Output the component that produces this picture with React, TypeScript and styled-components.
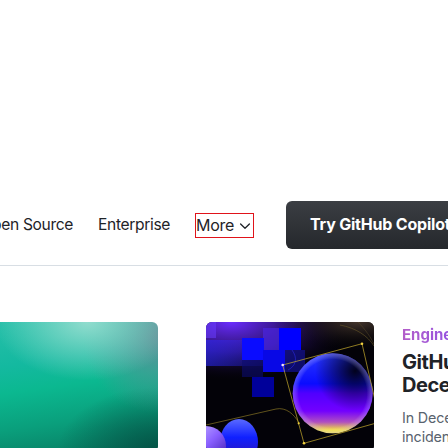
import React from "react";
import styled, { createGlobalStyle } from "styled-components";

const GlobalStyle = createGlobalStyle`
  html, body {
    margin: 0;
    padding: 0;
    background: #ffffff;
    overflow: hidden;
  }
  body {
    font-family: Inter, "Noto Sans", "Liberation Sans", sans-serif;
    color: #1f2328;
  }
`;

const Page = styled.div`
  width: 448px;
  height: 448px;
  overflow: hidden;
`;

const Header = styled.header`
  display: flex;
  align-items: center;
  padding: 201px 0 16px;
  border-bottom: 1px solid #d8dee4;
  white-space: nowrap;
`;

const NavList = styled.nav`
  display: flex;
  align-items: center;
  justify-content: flex-end;
  gap: 25px;
  flex: 0 0 300px;
  margin-left: -46px;
`;

const NavLink = styled.a`
  font-size: 15.6px;
  line-height: 24px;
  letter-spacing: -0.35px;
  color: #1f2328;
  text-decoration: none;
`;

const MoreButton = styled.button`
  display: inline-flex;
  align-items: center;
  gap: 3px;
  height: 25px;
  padding: 0;
  background: none;
  border: 1px solid #e0131a;
  font-family: inherit;
  font-size: 16px;
  letter-spacing: -0.3px;
  color: #1f2328;
`;

const Chevron = styled.svg`
  width: 16px;
  height: 16px;
  margin-top: 2px;
`;

const CtaButton = styled.a`
  display: inline-flex;
  align-items: center;
  flex-shrink: 0;
  height: 48px;
  margin-left: 32px;
  padding: 0 24px 2px;
  box-sizing: border-box;
  border-radius: 6px;
  background: linear-gradient(180deg, #3b3e43 0%, #25282c 100%);
  color: #ffffff;
  font-size: 16px;
  font-weight: 700;
  letter-spacing: -0.2px;
  text-decoration: none;
`;

const Posts = styled.section`
  display: flex;
  align-items: flex-start;
  gap: 48px;
  padding-top: 56px;
  margin-left: -10px;
`;

const Card = styled.article`
  display: flex;
  align-items: flex-start;
  gap: 28px;
  flex-shrink: 0;
`;

const Thumb = styled.div`
  width: 168px;
  height: 130px;
  border-radius: 6px;
  overflow: hidden;
  flex-shrink: 0;
`;

const TealThumb = styled(Thumb)`
  background:
    radial-gradient(ellipse 55% 45% at 58% 0%, rgba(150, 222, 208, 0.95) 0%, rgba(150, 222, 208, 0) 100%),
    radial-gradient(ellipse 45% 60% at 100% 10%, rgba(100, 140, 150, 0.95) 0%, rgba(100, 140, 150, 0) 100%),
    radial-gradient(ellipse 60% 50% at 100% 100%, rgba(3, 80, 68, 0.95) 0%, rgba(3, 80, 68, 0) 100%),
    linear-gradient(172deg, #27bfa9 0%, #14b9a0 30%, #0bb890 48%, #0a9f7c 72%, #08785f 100%);
`;

const PostText = styled.div`
  width: 340px;
  flex-shrink: 0;
  padding-top: 2px;
`;

const Category = styled.div`
  display: inline-block;
  font-size: 15px;
  font-weight: 700;
  line-height: 20px;
  background: linear-gradient(90deg, #b45ec9 0%, #9b55dc 45%, #7f4df0 100%);
  -webkit-background-clip: text;
  background-clip: text;
  color: transparent;
`;

const Title = styled.h3`
  margin: 6px 0 0;
  font-size: 20px;
  font-weight: 700;
  line-height: 23px;
  color: #1f2328;
  letter-spacing: -0.45px;
`;

const Excerpt = styled.p`
  margin: 11px 0 0;
  width: 262px;
  font-size: 14.3px;
  line-height: 19px;
  letter-spacing: -0.15px;
  color: #59636e;
`;

function CubesArt() {
  return (
    <svg width="168" height="130" viewBox="0 0 168 130" xmlns="http://www.w3.org/2000/svg">
      <defs>
        <radialGradient id="glowA" cx="0.15" cy="0" r="0.75">
          <stop offset="0" stopColor="#6a2cff" stopOpacity="1" />
          <stop offset="0.5" stopColor="#4a1db8" stopOpacity="0.6" />
          <stop offset="1" stopColor="#000000" stopOpacity="0" />
        </radialGradient>
        <radialGradient id="glowB" cx="0.9" cy="0" r="0.5">
          <stop offset="0" stopColor="#4a3a30" stopOpacity="0.9" />
          <stop offset="1" stopColor="#000000" stopOpacity="0" />
        </radialGradient>
        <linearGradient id="sphere" x1="0" y1="0" x2="0" y2="1">
          <stop offset="0" stopColor="#2a3aff" />
          <stop offset="0.38" stopColor="#0a0cff" />
          <stop offset="0.5" stopColor="#5000ff" />
          <stop offset="0.72" stopColor="#7200ff" />
          <stop offset="0.86" stopColor="#b050c0" />
          <stop offset="0.96" stopColor="#f4e23a" />
          <stop offset="1" stopColor="#f6e64a" />
        </linearGradient>
        <radialGradient id="sphereShade" cx="0.78" cy="0.22" r="0.5">
          <stop offset="0" stopColor="#000010" stopOpacity="0.95" />
          <stop offset="1" stopColor="#000010" stopOpacity="0" />
        </radialGradient>
        <radialGradient id="sphereRim" cx="0.5" cy="0.5" r="0.5">
          <stop offset="0.85" stopColor="#ffffff" stopOpacity="0" />
          <stop offset="1" stopColor="#c0b0ff" stopOpacity="0.35" />
        </radialGradient>
        <linearGradient id="blob" x1="0" y1="0" x2="0" y2="1">
          <stop offset="0" stopColor="#5a6aff" />
          <stop offset="0.4" stopColor="#1020ff" />
          <stop offset="1" stopColor="#3a10a0" />
        </linearGradient>
        <linearGradient id="blob2" x1="0" y1="0" x2="1" y2="1">
          <stop offset="0" stopColor="#d0c8ff" />
          <stop offset="0.5" stopColor="#8a60ff" />
          <stop offset="1" stopColor="#3010a0" />
        </linearGradient>
        <linearGradient id="haze" x1="0" y1="0" x2="1" y2="0">
          <stop offset="0" stopColor="#2a2aff" stopOpacity="0.55" />
          <stop offset="1" stopColor="#2a2aff" stopOpacity="0" />
        </linearGradient>
      </defs>
      <rect width="168" height="130" fill="#030208" />
      <rect width="168" height="80" fill="url(#glowA)" />
      <rect width="168" height="60" fill="url(#glowB)" />
      <rect x="0" y="18" width="90" height="26" fill="url(#haze)" />
      <rect x="0" y="0" width="10" height="16" fill="#6a3cff" opacity="0.55" />

      <rect x="57" y="6" width="17" height="22" fill="#4a25e0" opacity="0.7" />
      <rect x="36" y="16" width="22" height="22" fill="#0a0cff" />
      <rect x="73" y="6" width="22" height="22" fill="#0000ff" />
      <rect x="57" y="28" width="22" height="22" fill="#0808e6" />
      <rect x="79" y="28" width="20" height="22" fill="#12108a" opacity="0.75" />
      <rect x="36" y="38" width="21" height="17" fill="#0c0c70" opacity="0.6" />
      <rect x="46" y="55" width="22" height="20" fill="#00009a" />
      <path d="M86 28 C 92 36, 90 44, 82 48" stroke="#3030ff" strokeWidth="0.6" fill="none" opacity="0.8" />

      <path d="M0 103 L 70 87 C 80 85, 88 92, 93 101" stroke="#a08a2a" strokeWidth="0.6" fill="none" />
      <path d="M134 3 C 150 6, 162 14, 168 24" stroke="#6a5a2a" strokeWidth="0.6" fill="none" />
      <path d="M152 0 C 160 8, 165 16, 168 22" stroke="#5a4a2a" strokeWidth="0.5" fill="none" />

      <ellipse cx="33" cy="120" rx="19" ry="23" fill="url(#blob)" />
      <circle cx="0" cy="124" r="20" fill="url(#blob2)" />

      <circle cx="126.7" cy="71.3" r="40" fill="url(#sphere)" />
      <circle cx="126.7" cy="71.3" r="40" fill="url(#sphereShade)" />
      <circle cx="126.7" cy="71.3" r="40" fill="url(#sphereRim)" />

      <polygon points="76.7,43 156,21.7 174,100 98,121.3" stroke="#c8ae2e" strokeWidth="0.7" fill="none" />
      <circle cx="156" cy="21.7" r="1.3" fill="#f0d040" />
      <circle cx="98" cy="121.3" r="1.3" fill="#f0d040" />
      <circle cx="92.7" cy="101.3" r="1.1" fill="#f0d040" />
      <circle cx="76.7" cy="43" r="1.3" fill="#f0e0ff" />
    </svg>
  );
}

export default function App() {
  return (
    <Page>
      <GlobalStyle />
      <Header>
        <NavList>
          <NavLink href="#">Open Source</NavLink>
          <NavLink href="#">Enterprise</NavLink>
          <MoreButton type="button">
            More
            <Chevron viewBox="0 0 16 16" fill="none">
              <polyline points="3.6,6 8,10.3 12.4,6" stroke="#1f2328" strokeWidth="1.3" strokeLinecap="round" strokeLinejoin="round" />
            </Chevron>
          </MoreButton>
        </NavList>
        <CtaButton href="#">Try GitHub Copilot</CtaButton>
      </Header>
      <Posts>
        <Card>
          <TealThumb />
        </Card>
        <Card>
          <Thumb>
            <CubesArt />
          </Thumb>
          <PostText>
            <Category>Engineering</Category>
            <Title>GitHub Availability Report: December 2024</Title>
            <Excerpt>
              In December, we experienced three incidents that resulted in degraded performance across GitHub services.
            </Excerpt>
          </PostText>
        </Card>
      </Posts>
    </Page>
  );
}
